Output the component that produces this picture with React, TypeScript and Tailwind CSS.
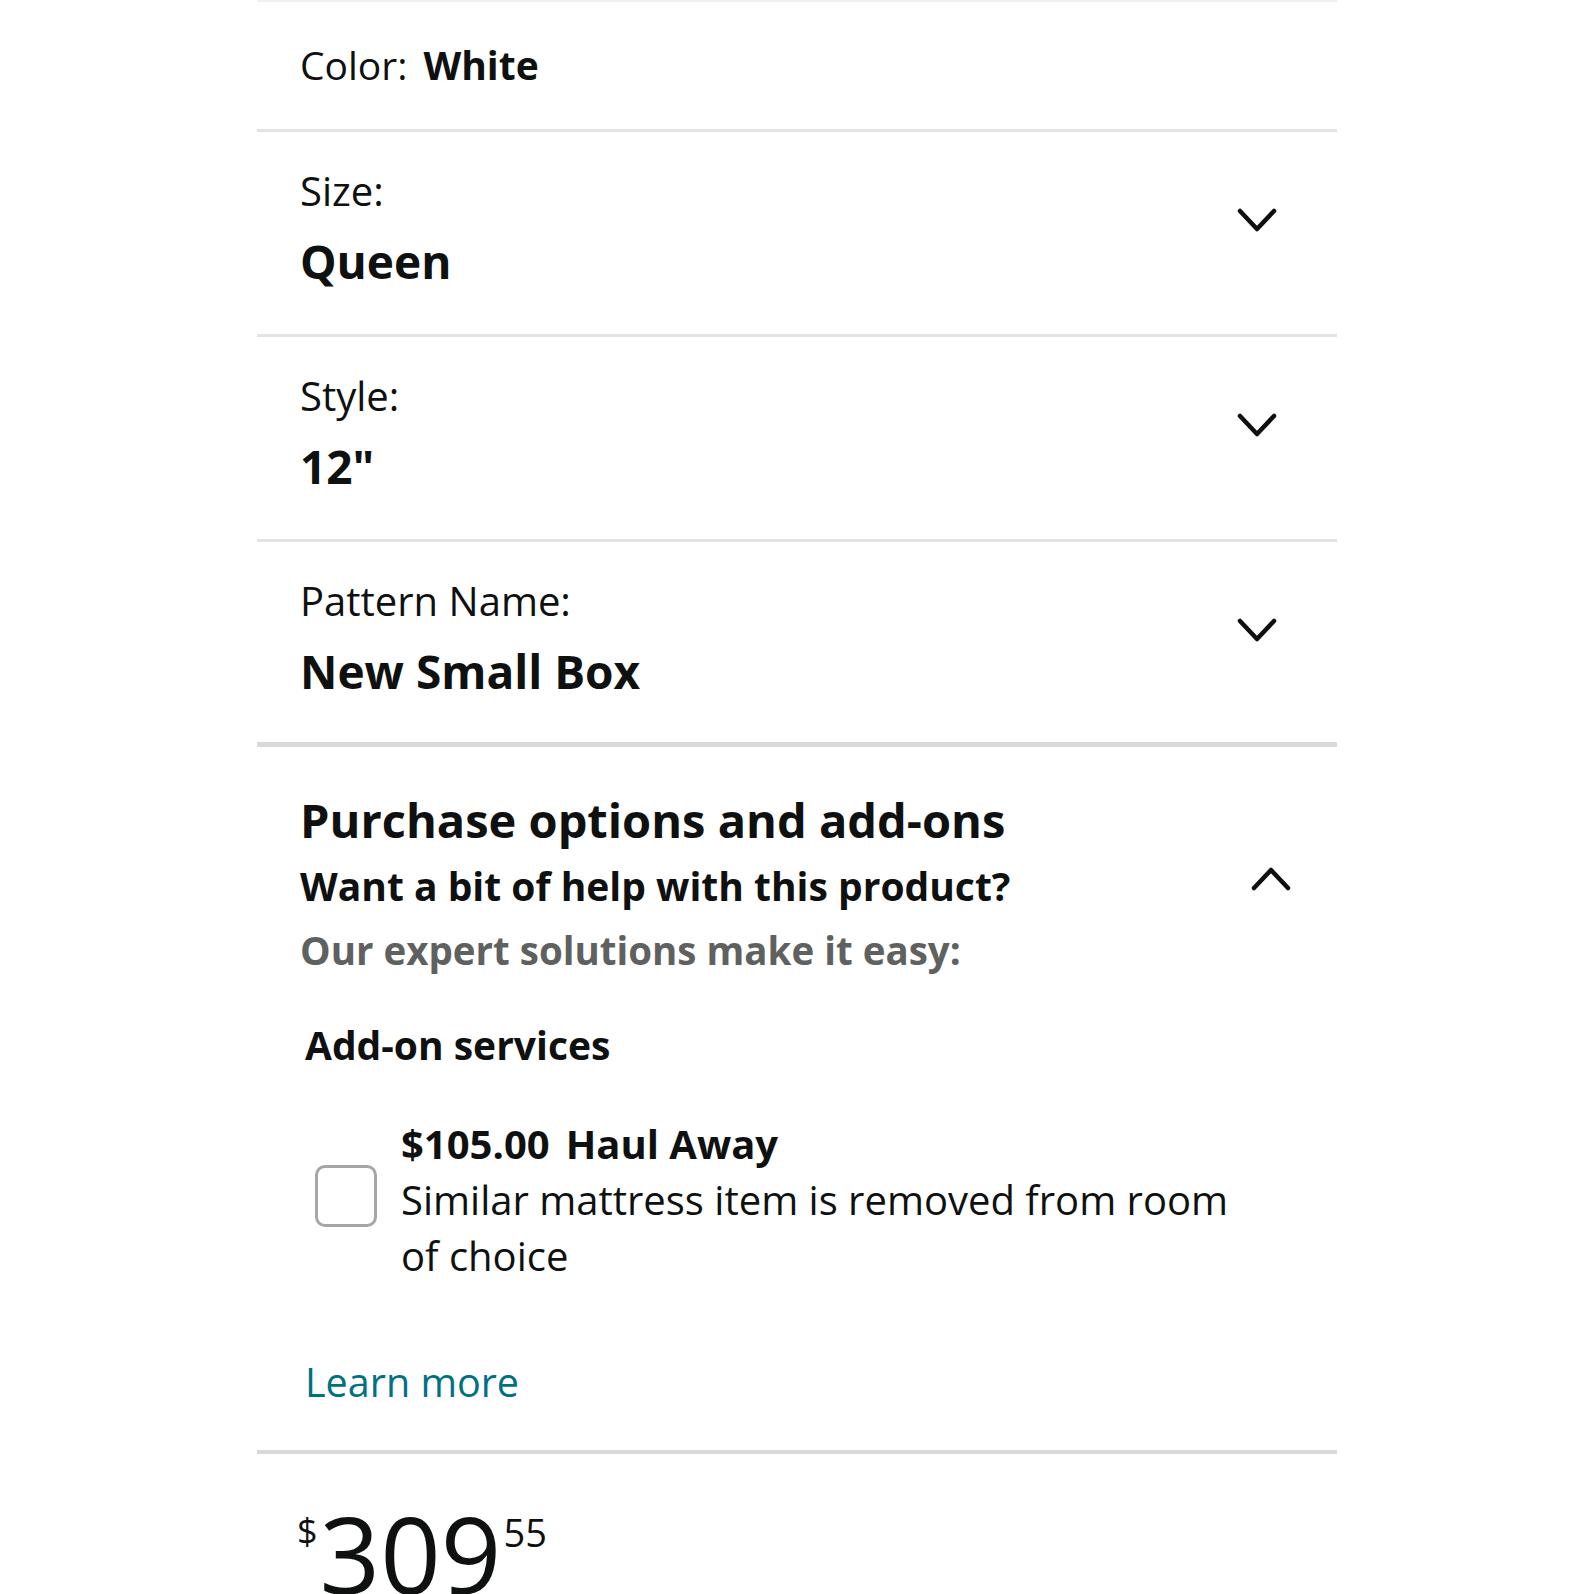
import React, { useState } from 'react';

const font = { fontFamily: '"Open Sans", "Noto Sans", Arial, sans-serif' };

// Simple chevron drawn to match the reference stroke
const Chevron = ({ up = false }: { up?: boolean }) => (
    <svg width="40" height="26" viewBox="0 0 40 26" fill="none">
        <path
            d={up ? 'M3 23 L20 5 L37 23' : 'M3 3 L20 21 L37 3'}
            stroke="#0f1111"
            strokeWidth="4.5"
            strokeLinecap="round"
            strokeLinejoin="round"
        />
    </svg>
);

const variations = [
    { label: 'Size:', value: 'Queen' },
    { label: 'Style:', value: '12"' },
    { label: 'Pattern Name:', value: 'New Small Box' },
];

const App = () => {
    const [haulAway, setHaulAway] = useState(false);

    return (
        <div className="min-h-screen bg-white text-[#0f1111]" style={font}>
            <div className="mx-auto w-[1080px] border-t-2 border-[#f0f0f0]">
                {/* Color row */}
                <div className="h-[130px] flex items-center pl-[43px] border-b-[3px] border-[#e3e3e3] text-[39px]">
                    <span>Color:</span>
                    <span className="ml-[16px] font-bold">White</span>
                </div>

                {/* Dropdown rows */}
                {variations.map((v, i) => (
                    <div
                        key={v.label}
                        className={`h-[205px] flex justify-between pl-[43px] pr-[60px] pt-[31px] ${
                            i === variations.length - 1
                                ? 'border-b-[5px] border-[#d9d9d9]'
                                : 'border-b-[3px] border-[#e3e3e3]'
                        }`}
                    >
                        <div className="flex flex-col">
                            <span className="text-[40px] leading-[56px]">{v.label}</span>
                            <span className="mt-[12px] text-[46px] leading-[60px] font-bold">{v.value}</span>
                        </div>
                        <div className="mt-[45px]">
                            <Chevron />
                        </div>
                    </div>
                ))}

                {/* Purchase options */}
                <div className="pt-[40px] pb-[40px] border-b-[4px] border-[#d9d9d9]">
                    <div className="flex justify-between pl-[43px] pr-[46px]">
                        <div className="flex flex-col">
                            <h2 className="text-[47px] leading-[66px] font-bold">Purchase options and add-ons</h2>
                            <p className="text-[39px] leading-[66px] font-bold">Want a bit of help with this product?</p>
                            <p className="text-[38.5px] leading-[62px] font-bold text-[#5f6161]">
                                Our expert solutions make it easy:
                            </p>
                        </div>
                        <div className="mt-[78px]">
                            <Chevron up />
                        </div>
                    </div>

                    <h3 className="mt-[36px] pl-[48px] text-[39px] leading-[56px] font-bold">Add-on services</h3>

                    <div className="mt-[43px] flex items-center pl-[58px]">
                        <button
                            onClick={() => setHaulAway(!haulAway)}
                            className="w-[62px] h-[62px] mb-[8px] shrink-0 rounded-[10px] border-[3px] border-[#a6a6a6] bg-white flex items-center justify-center"
                        >
                            {haulAway && (
                                <svg width="34" height="34" viewBox="0 0 24 24" fill="none">
                                    <path d="M5 12l5 5 9-10" stroke="#0f1111" strokeWidth="3" />
                                </svg>
                            )}
                        </button>
                        <div className="ml-[24px] w-[850px] text-[40px] leading-[56px]">
                            <div className="font-bold">
                                $105.00<span className="ml-[16px]">Haul Away</span>
                            </div>
                            <div>Similar mattress item is removed from room of choice</div>
                        </div>
                    </div>

                    <a className="block mt-[70px] pl-[48px] text-[39.5px] leading-[56px] text-[#007185]">Learn more</a>
                </div>

                {/* Price */}
                <div className="pt-[57px] pl-[40px] flex items-start">
                    <span className="text-[36px] leading-none mt-[2px]">$</span>
                    <span className="text-[106px] leading-[0.8] ml-[2px]">309</span>
                    <span className="text-[38px] leading-none ml-[2px] mt-[2px]">55</span>
                </div>
            </div>
        </div>
    );
};

export default App;
